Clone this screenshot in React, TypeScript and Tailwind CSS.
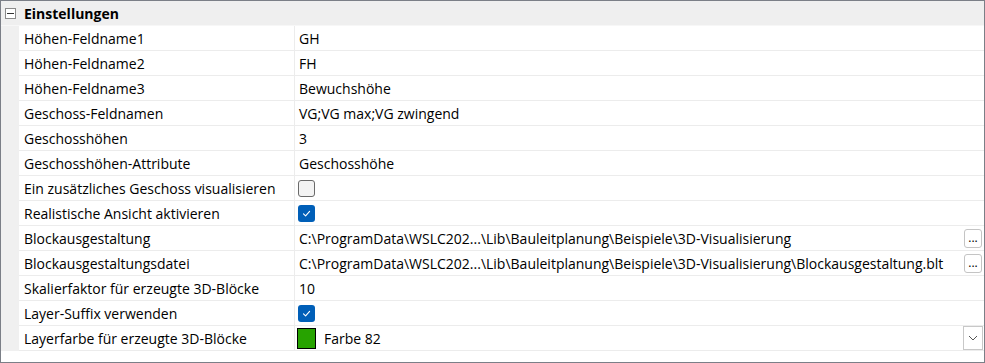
import React from 'react';

type Row =
  | { label: string; kind: 'text'; value: string; browse?: boolean }
  | { label: string; kind: 'check'; checked: boolean }
  | { label: string; kind: 'color'; value: string };

const rows: Row[] = [
  { label: 'Höhen-Feldname1', kind: 'text', value: 'GH' },
  { label: 'Höhen-Feldname2', kind: 'text', value: 'FH' },
  { label: 'Höhen-Feldname3', kind: 'text', value: 'Bewuchshöhe' },
  { label: 'Geschoss-Feldnamen', kind: 'text', value: 'VG;VG max;VG zwingend' },
  { label: 'Geschosshöhen', kind: 'text', value: '3' },
  { label: 'Geschosshöhen-Attribute', kind: 'text', value: 'Geschosshöhe' },
  { label: 'Ein zusätzliches Geschoss visualisieren', kind: 'check', checked: false },
  { label: 'Realistische Ansicht aktivieren', kind: 'check', checked: true },
  {
    label: 'Blockausgestaltung',
    kind: 'text',
    value: 'C:\\ProgramData\\WSLC202...\\Lib\\Bauleitplanung\\Beispiele\\3D-Visualisierung',
    browse: true,
  },
  {
    label: 'Blockausgestaltungsdatei',
    kind: 'text',
    value: 'C:\\ProgramData\\WSLC202...\\Lib\\Bauleitplanung\\Beispiele\\3D-Visualisierung\\Blockausgestaltung.blt',
    browse: true,
  },
  { label: 'Skalierfaktor für erzeugte 3D-Blöcke', kind: 'text', value: '10' },
  { label: 'Layer-Suffix verwenden', kind: 'check', checked: true },
  { label: 'Layerfarbe für erzeugte 3D-Blöcke', kind: 'color', value: 'Farbe 82' },
];

function CheckBox({ checked }: { checked: boolean }) {
  if (!checked) {
    return <div className="w-[17px] h-[17px] rounded-[3px] border border-[#6a6a6a] bg-[#f3f3f3]" />;
  }
  return (
    <div className="w-[17px] h-[17px] rounded-[3px] bg-[#005fb8] flex items-center justify-center">
      <svg width="11" height="11" viewBox="0 0 11 11" fill="none">
        <path d="M2.5 5.8 L4.6 7.8 L8.6 3.4" stroke="#ffffff" strokeWidth="1.1" strokeLinecap="round" strokeLinejoin="round" />
      </svg>
    </div>
  );
}

function ValueCell({ row }: { row: Row }) {
  if (row.kind === 'check') {
    return (
      <div className="flex items-center h-full pl-[3px]">
        <CheckBox checked={row.checked} />
      </div>
    );
  }
  if (row.kind === 'color') {
    return (
      <div className="flex items-center h-full pl-[2px]">
        <div className="w-[19px] h-[21px] bg-[#27a300] border border-black" />
        <span className="ml-[8px]">{row.value}</span>
        <div className="ml-auto mr-[1px] w-[20px] h-[24px] border border-[#c8c8c8] bg-white flex items-center justify-center">
          <svg width="10" height="6" viewBox="0 0 10 6" fill="none">
            <path d="M1 1 L5 5 L9 1" stroke="#555" strokeWidth="1" />
          </svg>
        </div>
      </div>
    );
  }
  return (
    <div className="flex items-center h-full pl-[4px]">
      <span className="whitespace-nowrap">{row.value}</span>
      {row.browse && (
        <div className="ml-auto mr-[2px] w-[18px] h-[19px] rounded-[3px] border border-[#c4c4c4] bg-white flex items-end justify-center pb-[3px] text-[12px] leading-none">
          ...
        </div>
      )}
    </div>
  );
}

export default function App() {
  return (
    <div
      className="w-[985px] h-[363px] border border-[#7b7f87] bg-white text-[14px] text-black overflow-hidden"
      style={{ fontFamily: '"Segoe UI", "Open Sans", sans-serif' }}
    >
      <div className="flex h-[25px] bg-[#efefef] border-b border-[#f7f7f7]">
        <div className="w-[18px] flex items-center justify-center">
          <div className="w-[11px] h-[11px] border border-[#8a8a8a] bg-white flex items-center justify-center mt-[1px] ml-[1px]">
            <div className="w-[7px] h-[1px] bg-[#333]" />
          </div>
        </div>
        <div className="flex items-center pl-[5px] font-bold">Einstellungen</div>
      </div>
      <div className="flex">
        <div className="w-[18px] bg-[#f0f0f0]" />
        <div className="flex-1 flex flex-col">
          {rows.map((row) => (
            <div key={row.label} className="flex h-[25px] border-b border-[#ececec]">
              <div className="w-[276px] border-r border-[#ececec] flex items-center pl-[5px] whitespace-nowrap">
                {row.label}
              </div>
              <div className="flex-1">
                <ValueCell row={row} />
              </div>
            </div>
          ))}
        </div>
      </div>
    </div>
  );
}
